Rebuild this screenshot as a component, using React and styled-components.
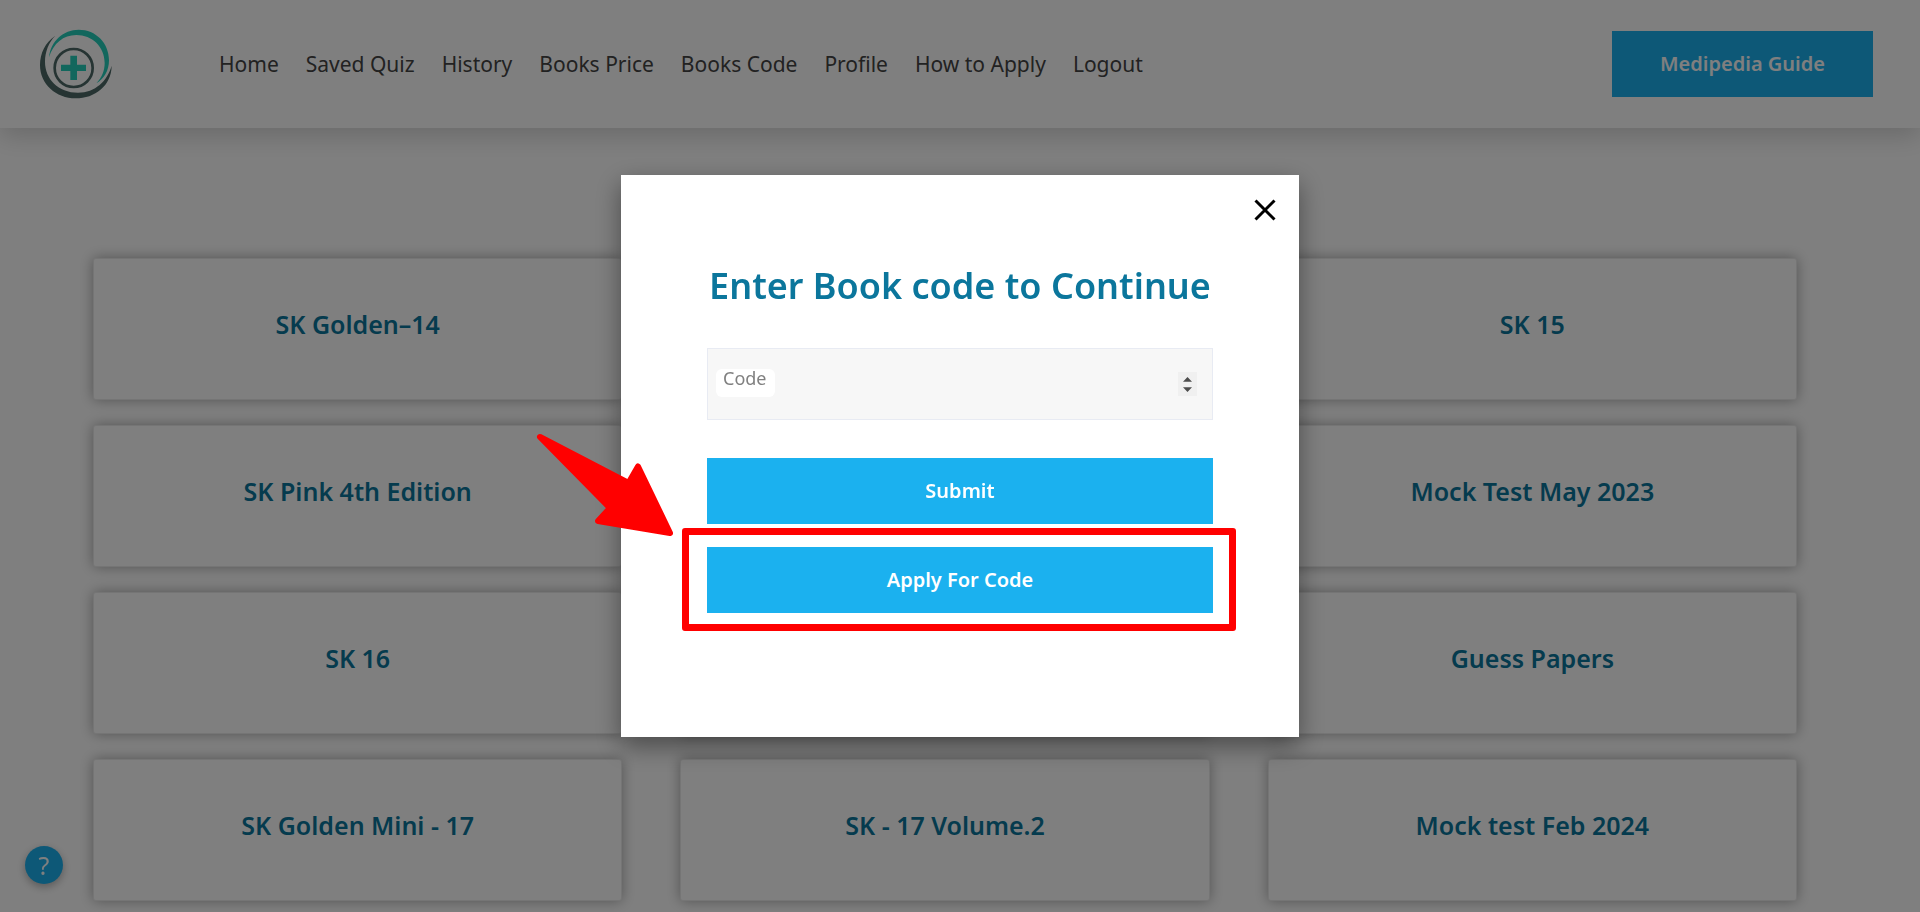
import React from "react";
import styled, { createGlobalStyle } from "styled-components";

const GlobalStyle = createGlobalStyle`
  *, *::before, *::after { box-sizing: border-box; }
  body {
    margin: 0;
    overflow: hidden;
    background: #fff;
    color: #444;
    font-family: "Noto Sans", "Open Sans", sans-serif;
  }
`;

const Header = styled.header`
  position: relative;
  display: flex;
  align-items: center;
  height: 128px;
  padding: 0 47px 0 40px;
  background: #fff;
  box-shadow: 0 8px 24px rgba(0, 0, 0, 0.17);
`;

const LogoLink = styled.a`
  display: flex;
  margin-right: 107px;
`;

const Nav = styled.nav`
  display: flex;
  flex: 1;
  gap: 27px;
`;

const NavLink = styled.a`
  color: #444;
  font-size: 21px;
  line-height: 28px;
  text-decoration: none;
  white-space: nowrap;
`;

const Button = styled.button`
  display: block;
  width: ${({ $wide }) => ($wide ? "100%" : "261px")};
  height: 66px;
  padding: 0;
  border: 0;
  background: #1bb1ef;
  color: #fff;
  font: 600 20px/28px "Noto Sans", sans-serif;
  cursor: pointer;
`;

const Books = styled.main`
  display: grid;
  grid-template-columns: repeat(3, 1fr);
  gap: 25px 58px;
  padding: 130px 123px 25px 93px;
`;

const BookCard = styled.a`
  display: flex;
  align-items: center;
  justify-content: center;
  height: 142px;
  padding-bottom: 10px;
  border: 1px solid rgba(0, 0, 0, 0.08);
  border-radius: 3px;
  background: #fff;
  box-shadow: 0 0 14px rgba(0, 0, 0, 0.35);
  color: #0b769c;
  font-size: 25px;
  font-weight: 600;
  line-height: 34px;
  text-decoration: none;
`;

const HelpButton = styled.button`
  position: fixed;
  bottom: 28px;
  left: 25px;
  width: 38px;
  height: 38px;
  padding: 0;
  border: 0;
  border-radius: 50%;
  background: #1bb1ef;
  box-shadow: 0 3px 8px rgba(0, 0, 0, 0.3);
  color: #fff;
  font: 400 25px/38px "Noto Sans", sans-serif;
  cursor: pointer;
`;

const Overlay = styled.div`
  position: fixed;
  inset: 0;
  display: flex;
  align-items: center;
  justify-content: center;
  background: rgba(0, 0, 0, 0.5);
`;

const Dialog = styled.section`
  position: relative;
  width: 100%;
  max-width: 678px;
  padding: 86px 86px 124px;
  background: #fff;
  box-shadow: 0 9px 24px rgba(0, 0, 0, 0.42);
`;

const CloseButton = styled.button`
  position: absolute;
  top: 19px;
  right: 18px;
  display: flex;
  padding: 0;
  border: 0;
  background: none;
  cursor: pointer;
`;

const Title = styled.h1`
  margin: 0 0 37px;
  color: #0b769c;
  font-size: 36px;
  font-weight: 600;
  line-height: 50px;
  text-align: center;
  white-space: nowrap;
`;

const Field = styled.div`
  position: relative;
  margin-bottom: 38px;
`;

const CodeInput = styled.input`
  display: block;
  width: 100%;
  height: 72px;
  padding: 0 40px 0 16px;
  border: 1px solid #e8ebf3;
  border-radius: 0;
  background: #f7f7f7;
  font: 400 18px/24px "Noto Sans", sans-serif;
  appearance: textfield;

  &::-webkit-inner-spin-button { appearance: none; }
`;

const FieldLabel = styled.label`
  position: absolute;
  top: 21px;
  left: 9px;
  height: 28px;
  padding: 0 8px 0 7px;
  border-radius: 6px;
  background: #fff;
  color: #808080;
  font-size: 18px;
  line-height: 18px;
`;

const Stepper = styled.svg`
  position: absolute;
  top: 24px;
  right: 16px;
`;

const Actions = styled.div`
  display: grid;
  gap: 23px;
`;

const Highlighted = styled.div`
  position: relative;
`;

const HighlightBox = styled.span`
  position: absolute;
  inset: -19px -23px -18px -25px;
  border: 7px solid #f00;
  border-radius: 3px;
  pointer-events: none;
`;

const Arrow = styled.svg`
  position: absolute;
  right: 100%;
  bottom: 76px;
  margin-right: 34px;
  pointer-events: none;
`;

function Logo() {
  return (
    <svg width="72" height="70" viewBox="60 40 216 210" role="img" aria-label="Medipedia">
      <path
        fill="#25cebb"
        d="M87 125C92 76 130 42 176 42C228 42 267 82 267 134C267 165 252 190 229 203C246 185 254 165 254 142C254 93 216 58 169 58C130 58 100 83 87 125Z"
      />
      <path
        fill="#4c6866"
        d="M106 60C76 80 60 112 60 148C60 205 108 248 167 248C225 248 274 210 275 150C262 195 226 231 174 231C115 231 75 190 75 138C75 108 86 80 106 60Z"
      />
      <circle cx="161" cy="157" r="57" fill="none" stroke="#4c6866" strokeWidth="8" />
      <path fill="#25cebb" d="M151 120h20v27h27v19h-27v27h-20v-27h-28v-19h28z" />
    </svg>
  );
}

const links = ["Home", "Saved Quiz", "History", "Books Price", "Books Code", "Profile", "How to Apply", "Logout"];

const books = [
  "SK Golden–14", "", "SK 15",
  "SK Pink 4th Edition", "", "Mock Test May 2023",
  "SK 16", "", "Guess Papers",
  "SK Golden Mini - 17", "SK - 17 Volume.2", "Mock test Feb 2024",
];

export default function App() {
  return (
    <>
      <GlobalStyle />
      <Header>
        <LogoLink href="#home"><Logo /></LogoLink>
        <Nav>
          {links.map((text) => <NavLink key={text} href="#nav">{text}</NavLink>)}
        </Nav>
        <Button type="button">Medipedia Guide</Button>
      </Header>
      <Books>
        {books.map((title, i) => <BookCard key={i} href="#book">{title}</BookCard>)}
      </Books>
      <HelpButton type="button">?</HelpButton>
      <Overlay>
        <Dialog role="dialog" aria-modal="true" aria-labelledby="dialog-title">
          <CloseButton type="button" aria-label="Close">
            <svg width="32" height="32" viewBox="0 0 32 32" fill="none" stroke="#000" strokeWidth="3">
              <path d="M6.500 6.500L25.500 25.500M25.500 6.500L6.500 25.500" />
            </svg>
          </CloseButton>
          <Title id="dialog-title">Enter Book code to Continue</Title>
          <Field>
            <CodeInput id="code" type="number" />
            <FieldLabel htmlFor="code">Code</FieldLabel>
            <Stepper width="19" height="24" viewBox="0 0 19 24" aria-hidden="true">
              <path fill="#f0f0f0" d="M0 0h19v24H0z" />
              <path fill="#4d4d4d" d="M9.500 5L14 9.800H5zM9.500 20L5 15.200H14z" />
            </Stepper>
          </Field>
          <Actions>
            <Button type="button" $wide>Submit</Button>
            <Highlighted>
              <Button type="button" $wide>Apply For Code</Button>
              <HighlightBox />
              <Arrow width="138" height="105" viewBox="535 431 138 105" aria-hidden="true">
                <path
                  fill="#f00"
                  stroke="#f00"
                  strokeWidth="6"
                  strokeLinejoin="round"
                  d="M540 436L628.500 482L638 465.500L670 532L598 520L610 507Z"
                />
              </Arrow>
            </Highlighted>
          </Actions>
        </Dialog>
      </Overlay>
    </>
  );
}
